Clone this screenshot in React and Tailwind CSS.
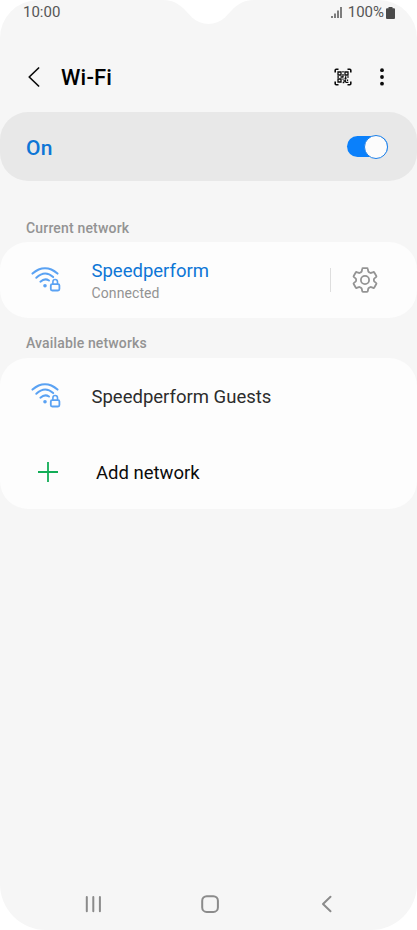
const WifiLockIcon = () => (
  <svg className="h-8 w-8 shrink-0" viewBox="0 0 32 32" fill="none" stroke="#5aa2f3" strokeWidth="2" strokeLinecap="round">
    <path d="M2.5 9.6C10.5 2.6 19.5 2.6 27.5 9.6" />
    <path d="M6.3 13.8C12 8.4 18 8.4 23.2 13.1" />
    <path d="M10.4 17.7C13.5 14.9 16.5 14.9 19 16.5" />
    <circle cx="15" cy="21.8" r="1.8" fill="#5aa2f3" stroke="none" />
    <rect x="20.8" y="20.1" width="8.6" height="6.4" rx="1.4" strokeWidth="1.8" />
    <path d="M22.9 19.8V17.8a2.3 2.3 0 0 1 4.6 0V19.8" strokeWidth="1.6" />
  </svg>
);

const GearIcon = () => (
  <svg className="h-[26px] w-[26px] shrink-0" viewBox="0 0 26 26" fill="none" stroke="#949494" strokeWidth="1.8" strokeLinejoin="round">
    <path d="M11 1.2h4q.7 0 .8.7l.4 2.3q.1.6.7.9l1.2.7q.5.3 1.1.1l2-.8q.7-.3 1.1.4l2 3.5q.4.7-.2 1.1l-1.7 1.3q-.5.4-.5 1v1.2q0 .6.5 1l1.7 1.3q.6.4.2 1.1l-2 3.5q-.4.7-1.1.4l-2-.8q-.6-.2-1.1.1l-1.2.7q-.6.3-.7.9l-.4 2.3q-.1.7-.8.7h-4q-.7 0-.8-.7l-.4-2.3q-.1-.6-.7-.9l-1.2-.7q-.5-.3-1.1-.1l-2 .8q-.7.3-1.1-.4l-2-3.5q-.4-.7.2-1.1l1.7-1.3q.5-.4.5-1v-1.2q0-.6-.5-1L1.900 10.100q-.6-.4-.2-1.100l2-3.500q.4-.7 1.100-.4l2 .8q.6.2 1.100-.1l1.200-.7q.6-.3.7-.9l.4-2.300q.1-.7.8-.7z" />
    <circle cx="13" cy="13" r="4.1" />
  </svg>
);

const QrIcon = () => (
  <svg className="h-[18px] w-[18px]" viewBox="0 0 18 18" fill="none" stroke="#0b0b0b" strokeWidth="1.3">
    <path d="M1.2 4.5V2.2q0-1 1-1h2.3M13.5 1.2h2.3q1 0 1 1v2.3M16.8 13.5v2.3q0 1-1 1h-2.3M4.500 16.800H2.200q-1 0-1-1v-2.300" strokeWidth="1.6" />
    <path d="M4 4h3v3H4zM11 4h3v3h-3zM4 11h3v3H4z" />
    <path d="M9 3v1.5M9 6v3M3.3 9H5M6.5 9h3M11 9h1.3M13.3 9h1.4M9 10.5v1.3M10.5 10.5h2M13.5 11.5v1.5M9.3 13h2M8.7 14.6h1.5M11.8 14.4h2.6M11.3 11.5v3" />
  </svg>
);

const StatusBar = () => (
  <div className="flex h-6 items-center justify-between pl-[23px] pr-[22px] text-[15px] leading-6 text-[#555]">
    <span>10:00</span>
    <div className="flex items-center">
      <svg className="mr-[6px] h-3 w-[11px]" viewBox="0 0 11 12" stroke="#555" strokeWidth="1.5">
        <path d="M1 10v2M4 7.5V12M7 4.5V12M10 1v11" />
      </svg>
      <span>100%</span>
      <svg className="ml-[2px] mt-px h-3 w-[9px]" viewBox="0 0 9 12" fill="#4a4a4a">
        <path d="M2.5 0h4v1.2H8q1 0 1 1V11q0 1-1 1H1q-1 0-1-1V2.2q0-1 1-1h1.5z" />
      </svg>
    </div>
  </div>
);

const NetworkRow = ({ name, status, nameColor, children }) => (
  <div className="flex h-[76px] items-center pl-[30px] pr-[39px]">
    <WifiLockIcon />
    <div className="ml-[29.5px] flex-1 pt-[2px]">
      <p className={`text-[18.5px] leading-6 ${nameColor}`}>{name}</p>
      {status && <p className="text-sm leading-5 tracking-[0.1px] text-[#939393]">{status}</p>}
    </div>
    {children}
  </div>
);

const NavBar = () => (
  <div className="flex h-[52px] items-center justify-between pl-[84px] pr-[81px]">
    <svg className="h-5 w-5" viewBox="0 0 20 20" stroke="#8b8b8b" strokeWidth="2" strokeLinecap="round">
      <path d="M2.8 3v14.3M9.3 3v14.3M15.9 3v14.3" />
    </svg>
    <svg className="h-5 w-5" viewBox="0 0 20 20" fill="none" stroke="#8b8b8b" strokeWidth="2">
      <rect x="2.2" y="2.2" width="15.7" height="15.7" rx="4.5" />
    </svg>
    <svg className="h-5 w-5" viewBox="0 0 20 20" fill="none" stroke="#8b8b8b" strokeWidth="2" strokeLinecap="round" strokeLinejoin="round">
      <path d="M14.5 2.8L7 10l7.5 7.3" />
    </svg>
  </div>
);

const App = () => (
  <div className="min-h-screen bg-white font-['Roboto',sans-serif]">
    <div className="relative flex h-[930px] w-[417px] flex-col overflow-hidden rounded-t-[38px] rounded-b-[46px] bg-[#f6f6f6]">
      {/* Camera notch */}
      <svg className="absolute left-[160px] top-0 h-[25px] w-[100px]" viewBox="0 0 100 25" fill="#fff">
        <path d="M3 0C13 0 19 4 25 10L32 17.5C41 26 56 26 65 17.5L72 10C78 4 84 0 94 0z" />
      </svg>
      <StatusBar />

      <header className="mt-[27px] flex h-[52px] items-center pl-[26px] pr-[33px]">
        <svg className="h-6 w-[15px]" viewBox="0 0 15 24" fill="none" stroke="#0b0b0b" strokeWidth="1.7" strokeLinecap="round" strokeLinejoin="round">
          <path d="M12.6 3L3.2 12l9.4 9" />
        </svg>
        <h1 className="ml-5 flex-1 pt-[2px] text-[22px] font-medium leading-8 tracking-[0.2px] text-black">Wi-Fi</h1>
        <QrIcon />
        <svg className="ml-7 h-[18px] w-1" viewBox="0 0 4 18" fill="#0b0b0b">
          <circle cx="2" cy="2.2" r="1.9" />
          <circle cx="2" cy="9" r="1.9" />
          <circle cx="2" cy="15.7" r="1.9" />
        </svg>
      </header>

      <div className="mt-[9px] flex h-[69px] items-center justify-between rounded-[28px] bg-[#e8e8e8] pl-[26px] pr-[29px]">
        <span className="pt-[2px] text-[21px] font-medium leading-8 tracking-[0.3px] text-[#0d76d6]">On</span>
        <div className="flex h-[21px] w-[41px] items-center justify-end rounded-full bg-[#0a80fb]">
          <div className="h-6 w-6 shrink-0 rounded-full border border-[#1c7fe8] bg-[#fcfcfc]" />
        </div>
      </div>

      <h2 className="mt-[37px] pl-[26px] text-sm font-medium leading-5 tracking-[0.17px] text-[#939393]">Current network</h2>
      <div className="mt-1 rounded-[28px] bg-[#fdfdfd]">
        <NetworkRow name="Speedperform" status="Connected" nameColor="text-[#0d76d6]">
          <div className="mr-[21px] h-6 w-px bg-[#dedede]" />
          <div className="pb-px">
            <GearIcon />
          </div>
        </NetworkRow>
      </div>

      <h2 className="mt-[15px] pl-[26px] text-sm font-medium leading-5 tracking-[0.15px] text-[#939393]">Available networks</h2>
      <div className="mt-[5px] rounded-[28px] bg-[#fdfdfd]">
        <NetworkRow name="Speedperform Guests" nameColor="text-[#2c2c2c]" />
        <div className="flex h-[75px] items-center pl-[38px]">
          <svg className="h-5 w-5" viewBox="0 0 20 20" stroke="#12ad57" strokeWidth="1.8">
            <path d="M10 0v20M0 10h20" />
          </svg>
          <span className="ml-[38px] pt-[2px] text-[18.5px] leading-6 text-[#0b0b0b]">Add network</span>
        </div>
      </div>

      <div className="flex-1" />
      <NavBar />
    </div>
  </div>
);

export default App;
